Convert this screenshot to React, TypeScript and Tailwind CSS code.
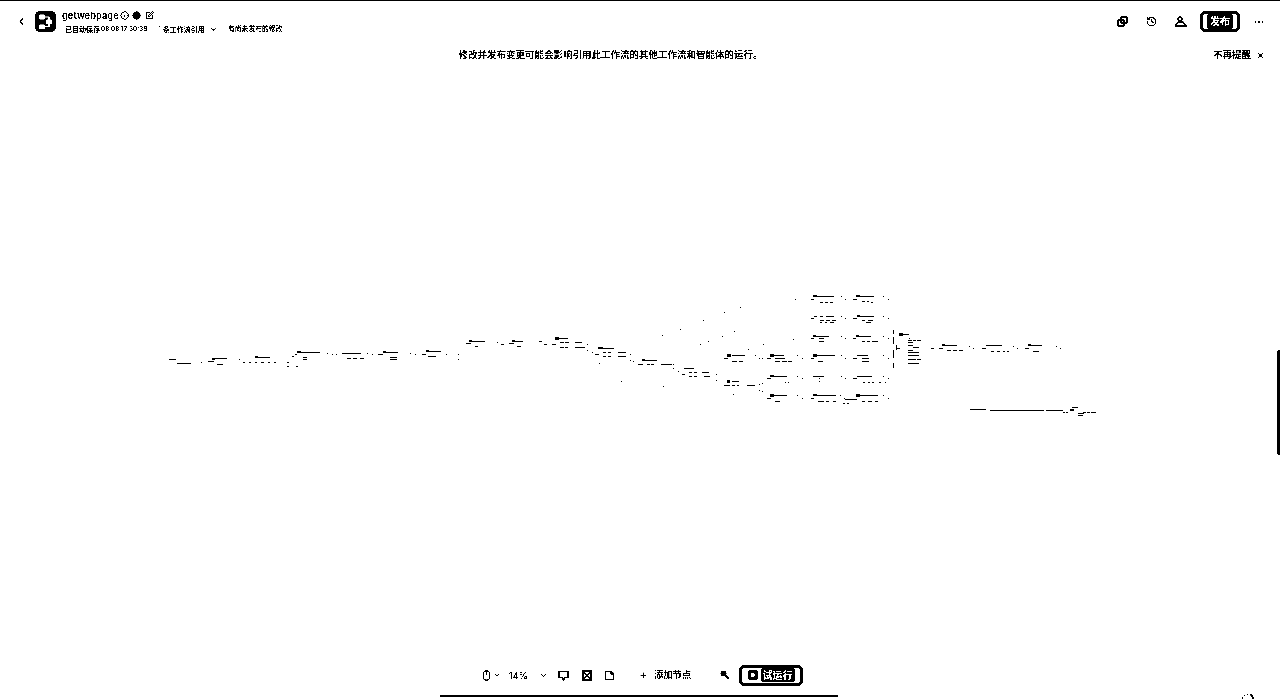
import { ChevronDown, ChevronLeft, History, Info, Mouse, Play, Plus, SquarePen, StickyNote, X, CircleCheck, Ellipsis } from "lucide-react";

// workflow graph seen from far away: [x1, x2, y, thickness?] in page pixels
const marks: number[][] = [
  [169, 175, 359, 1], [177, 190, 363], [201, 201, 362], [208, 213, 361], [212, 214, 358, 2], [215, 226, 358], [217, 222, 364],
  [239, 239, 359], [243, 244, 362], [249, 250, 362], [255, 256, 362], [261, 263, 362], [268, 269, 362], [274, 275, 362], [255, 257, 356, 2], [258, 269, 357],
  [287, 288, 362], [287, 288, 366], [296, 297, 366], [292, 293, 356], [295, 296, 354], [297, 300, 351, 2], [301, 319, 352], [303, 306, 357], [303, 306, 359],
  [327, 327, 353], [332, 332, 354], [336, 336, 354], [342, 360, 353], [347, 350, 358], [353, 356, 358], [360, 363, 358],
  [367, 367, 353], [372, 372, 354], [378, 382, 354], [383, 385, 351, 2], [386, 397, 352], [390, 396, 357], [390, 396, 359],
  [410, 410, 353], [415, 415, 354], [422, 425, 354], [426, 428, 350, 2], [429, 440, 351], [428, 435, 356], [446, 446, 354], [458, 458, 354], [458, 458, 359],
  [466, 470, 343], [469, 471, 340, 2], [472, 484, 341], [475, 477, 346], [497, 497, 342], [501, 503, 344], [509, 513, 343], [512, 514, 340, 2], [515, 522, 341], [517, 520, 346],
  [539, 541, 341], [544, 546, 344], [552, 555, 344], [555, 558, 337, 3], [559, 567, 338], [560, 563, 342], [565, 568, 342], [560, 563, 347], [565, 567, 347], [575, 581, 342], [575, 584, 347], [587, 587, 344],
  [587, 587, 350], [592, 592, 352], [595, 598, 354], [598, 602, 347, 2], [603, 613, 348], [603, 605, 352], [608, 610, 352], [603, 605, 356], [608, 610, 356], [618, 625, 352], [618, 625, 356], [630, 630, 354], [599, 599, 363],
  [630, 630, 360], [633, 633, 361], [638, 642, 364], [642, 644, 359, 2], [645, 656, 360], [647, 649, 364], [651, 653, 364], [661, 671, 364], [673, 673, 364], [673, 673, 368],
  [678, 678, 371], [682, 684, 374], [684, 693, 368], [689, 691, 372], [694, 696, 372], [689, 691, 376], [694, 696, 376], [702, 708, 372], [704, 709, 376], [716, 716, 374], [716, 716, 380],
  // stray connector dots
  [740, 740, 307], [724, 724, 312], [703, 703, 320], [680, 680, 329], [662, 662, 335], [734, 734, 331], [722, 722, 336], [708, 708, 341], [700, 700, 344], [748, 748, 349], [621, 621, 381], [663, 663, 386], [733, 733, 394], [763, 763, 344], [795, 795, 299], [793, 793, 339],
  // branch rows
  [811, 813, 299], [813, 816, 295, 2], [817, 833, 296], [820, 822, 302], [825, 827, 302], [830, 832, 302], [841, 841, 296], [845, 845, 299], [853, 856, 299], [856, 859, 295, 2], [860, 873, 296], [862, 864, 301], [867, 868, 301], [871, 872, 302], [883, 883, 296], [888, 888, 299],
  [811, 813, 318], [814, 816, 316], [820, 822, 316], [826, 833, 316], [820, 823, 320], [826, 829, 320], [832, 835, 320], [820, 821, 322], [825, 826, 322], [830, 833, 322], [841, 841, 316], [845, 845, 318], [853, 856, 318], [857, 859, 315, 2], [860, 873, 316], [862, 864, 320], [868, 872, 320], [866, 870, 322], [883, 883, 316], [888, 888, 318],
  [811, 813, 338], [813, 815, 335, 2], [816, 828, 336], [819, 823, 338], [819, 823, 341], [841, 841, 336], [845, 845, 338], [853, 855, 338], [856, 858, 335, 2], [859, 870, 336], [862, 864, 341], [867, 869, 341], [872, 877, 341], [883, 883, 336], [888, 888, 338],
  [724, 727, 358], [727, 730, 354, 3], [732, 744, 355], [732, 736, 361], [739, 742, 361], [755, 755, 355], [759, 759, 358], [762, 762, 358], [767, 770, 358], [770, 773, 354, 3], [774, 783, 355], [775, 784, 358], [775, 779, 361], [782, 786, 361], [788, 791, 361], [797, 797, 355], [802, 802, 358],
  [811, 813, 358], [813, 816, 354, 3], [817, 834, 355], [818, 822, 361], [841, 841, 355], [845, 845, 358], [853, 856, 358], [857, 867, 355], [862, 868, 358], [862, 868, 361], [883, 883, 355], [888, 888, 358],
  [724, 727, 385], [727, 729, 380, 3], [732, 738, 381], [727, 729, 385], [732, 734, 385], [737, 738, 385], [747, 754, 385], [759, 759, 384], [762, 762, 383], [759, 759, 390], [762, 762, 391],
  [767, 770, 378], [770, 773, 375, 2], [774, 786, 376], [785, 785, 382], [788, 788, 382], [797, 797, 376], [802, 802, 378], [813, 823, 376], [819, 819, 378], [819, 819, 381], [841, 841, 376], [845, 845, 378], [853, 856, 378], [857, 871, 376], [863, 864, 382], [868, 869, 382], [872, 873, 382], [879, 880, 382], [885, 885, 382], [883, 883, 376], [888, 888, 378],
  [767, 770, 398], [770, 773, 394, 3], [774, 786, 395], [775, 779, 401], [797, 797, 395], [802, 802, 398], [811, 813, 398], [813, 816, 394, 2], [817, 835, 395], [818, 823, 401], [826, 828, 401], [833, 835, 401], [840, 840, 395], [844, 844, 398], [845, 856, 399], [856, 859, 394, 3], [860, 877, 395], [862, 864, 401], [868, 871, 401], [875, 877, 401], [843, 844, 403], [847, 848, 403], [883, 883, 395], [888, 888, 398],
  // merge node
  [899, 902, 333, 3], [903, 908, 334], [909, 909, 338], [908, 911, 340], [913, 915, 340], [917, 920, 340], [908, 912, 342], [908, 912, 345], [913, 918, 347], [908, 912, 350], [908, 912, 352], [913, 918, 352], [908, 912, 355], [913, 918, 355], [908, 912, 359], [913, 915, 359], [917, 920, 359], [908, 912, 363], [913, 918, 363], [896, 899, 348],
  [931, 933, 348], [939, 942, 348], [942, 944, 344, 2], [945, 956, 345], [947, 950, 350], [953, 956, 350], [959, 962, 350], [969, 969, 346], [973, 973, 348], [982, 985, 348], [986, 1001, 345], [991, 993, 351], [997, 999, 351], [1003, 1004, 351], [1007, 1008, 351], [1013, 1013, 346], [1017, 1017, 348], [1025, 1028, 348], [1028, 1030, 344, 2], [1031, 1041, 345], [1033, 1038, 351], [1056, 1056, 346], [1060, 1060, 348],
  // detached chain
  [970, 985, 409], [990, 1043, 410], [1046, 1062, 410], [1063, 1064, 412], [1066, 1067, 412], [1070, 1073, 409, 2], [1072, 1077, 407], [1078, 1083, 413], [1083, 1085, 412], [1087, 1089, 412], [1091, 1095, 412], [1078, 1082, 415],
];

const bracket = [[330, 334], [337, 344], [350, 358], [363, 368]];

function Graph() {
  return (
    <svg className="absolute top-0 left-0 pointer-events-none" width="1280" height="699" shapeRendering="crispEdges">
      {marks.map(([x1, x2, y, h = 1], i) => (
        <rect key={i} x={x1} y={y} width={x2 - x1 + 1} height={h} fill="#000" />
      ))}
      {bracket.map(([a, b]) => (
        <rect key={a} x={893} y={a} width={1} height={b - a} fill="#000" />
      ))}
      <rect x={896} y={345} width={1} height={5} fill="#000" />
    </svg>
  );
}

const Logo = () => (
  <svg width="21" height="21" viewBox="0 0 21 21" className="ml-[8px]">
    <rect width="21" height="21" rx="5" fill="#000" />
    <rect x="4" y="3.5" width="6" height="5" rx="1" fill="#fff" />
    <rect x="11" y="8.5" width="6" height="4.5" rx="1" fill="#fff" />
    <rect x="4" y="13.5" width="6" height="4.5" rx="1" fill="#fff" />
    <path d="M10 6h4v3M10 15.5h4v-3" fill="none" stroke="#fff" strokeWidth="1.2" />
  </svg>
);

const LinkedSquares = () => (
  <svg width="11" height="11" viewBox="0 0 11 11" fill="none" stroke="#000" strokeWidth="2">
    <rect x="1" y="4" width="6" height="6" rx="2" />
    <rect x="4" y="1" width="6" height="6" rx="2" />
  </svg>
);

const Person = () => (
  <svg width="12" height="11" viewBox="0 0 12 11" className="ml-[18px]" fill="none" stroke="#000" strokeWidth="1.5">
    <circle cx="5" cy="3" r="2" />
    <path d="M1 10c0-3 2-4 4-4h3l3 4z" />
  </svg>
);

const Comment = () => (
  <svg width="11" height="11" viewBox="0 0 11 11" className="ml-[10px]" fill="none" stroke="#000" strokeWidth="1.7">
    <path d="M1 1.5h9v6H7L5.5 9.5 4 7.5H1z" />
  </svg>
);

const CrossGrid = () => (
  <svg width="10" height="11" viewBox="0 0 10 11" className="ml-[13px]" fill="none" stroke="#000" strokeWidth="1.5">
    <rect x="1" y="1" width="8" height="9" />
    <path d="M1 1l8 9M9 1L1 10" />
  </svg>
);

const Brush = () => (
  <svg width="10" height="10" viewBox="0 0 10 10" className="ml-[28px]" fill="none">
    <circle cx="3.5" cy="3.5" r="3" fill="#000" />
    <path d="M5 5l4 4" stroke="#000" strokeWidth="2" />
  </svg>
);

export default function App() {
  return (
    <div className="relative h-[699px] w-[1280px] overflow-hidden bg-white text-black grayscale contrast-[30] font-['Inter','Noto_Sans_CJK_SC',sans-serif]">
      <Graph />

      <header className="relative flex h-[42px] items-center border-t border-black pr-[15px]">
        <ChevronLeft className="ml-[16px] size-[11px]" strokeWidth={3} />
        <Logo />
        <div className="ml-[6px] flex flex-col">
          <div className="flex h-[13px] items-center">
            <span className="w-[56px] text-[9.4px] font-semibold leading-none">getwebpage</span>
            <Info className="ml-[2px] size-[9px]" strokeWidth={2.5} />
            <CircleCheck className="ml-[3px] size-[9px] fill-black text-black" />
            <SquarePen className="ml-[4px] size-[9px]" strokeWidth={2.5} />
          </div>
          <div className="ml-[3px] mt-[2px] flex h-[10px] items-center text-[7px] leading-none font-semibold">
            <span className="w-[36px]">已自动保存</span>
            <span className="w-[57px] text-[6.4px]">08 08 17:30:39</span>
            <span className="w-[52px]">1 条工作流引用</span>
            <ChevronDown className="size-[7px] fill-black" strokeWidth={3} />
            <span className="ml-[11px] text-[6.8px]">有尚未发布的修改</span>
          </div>
        </div>
        <div className="ml-auto flex items-center">
          <LinkedSquares />
          <History className="ml-[18px] size-[11px]" strokeWidth={2.5} />
          <Person />
          <button className="ml-[13px] flex h-[21px] w-[40px] items-center justify-center rounded-[5px] border-[3px] border-black bg-white">
            <span className="rounded-[2px] bg-black px-[3px] text-[10px] leading-[15px] font-bold text-white">发布</span>
          </button>
          <Ellipsis className="ml-[13px] size-[12px]" strokeWidth={2.5} />
        </div>
      </header>

      <div className="relative flex h-[26px] items-center pr-[15px]">
        <p className="flex-1 pl-[8px] text-center text-[9.5px] font-semibold leading-none">修改并发布变更可能会影响引用此工作流的其他工作流和智能体的运行。</p>
        <span className="text-[9.5px] font-semibold leading-none">不再提醒</span>
        <X className="ml-[5px] size-[9px]" strokeWidth={3} />
      </div>

      <div className="absolute right-0 top-[350px] h-[105px] w-[3px] rounded-l-[2px] bg-black" />

      <div className="absolute bottom-0 left-[440px] flex w-[398px] flex-col items-center">
        <div className="flex h-[22px] w-full items-center pl-[41px] text-[9px] font-semibold leading-none">
          <Mouse className="size-[11px]" strokeWidth={2.5} />
          <ChevronDown className="ml-[1px] size-[8px]" strokeWidth={2.5} />
          <span className="ml-[8px] w-[30px]">14%</span>
          <ChevronDown className="size-[9px]" strokeWidth={2.5} />
          <Comment />
          <CrossGrid />
          <StickyNote className="ml-[12px] size-[11px]" strokeWidth={3} />
          <Plus className="ml-[24px] size-[9px]" strokeWidth={2.5} />
          <span className="ml-[6px] w-[38px] text-[9.3px]">添加节点</span>
          <Brush />
          <button className="ml-[9px] flex h-[21px] w-[64px] items-center justify-center gap-[3px] rounded-[5px] border-[3px] border-black bg-white">
            <span className="flex size-[10px] items-center justify-center rounded-[2px] bg-black">
              <Play className="size-[6px] fill-white text-white" />
            </span>
            <span className="rounded-[2px] bg-black px-[2px] text-[10px] leading-[14px] font-bold text-white">试运行</span>
          </button>
        </div>
        <div className="mt-[9px] mb-[2px] h-[2px] w-full bg-black" />
      </div>

      <svg className="absolute bottom-0 left-[1240px]" width="16" height="8" viewBox="0 0 16 8">
        <path d="M2 8 A6 6 0 0 1 13 6" fill="none" stroke="#000" strokeWidth="1" strokeDasharray="2 1.5" />
        <path d="M11 3 L13.5 8" fill="none" stroke="#000" strokeWidth="2" />
      </svg>
    </div>
  );
}
